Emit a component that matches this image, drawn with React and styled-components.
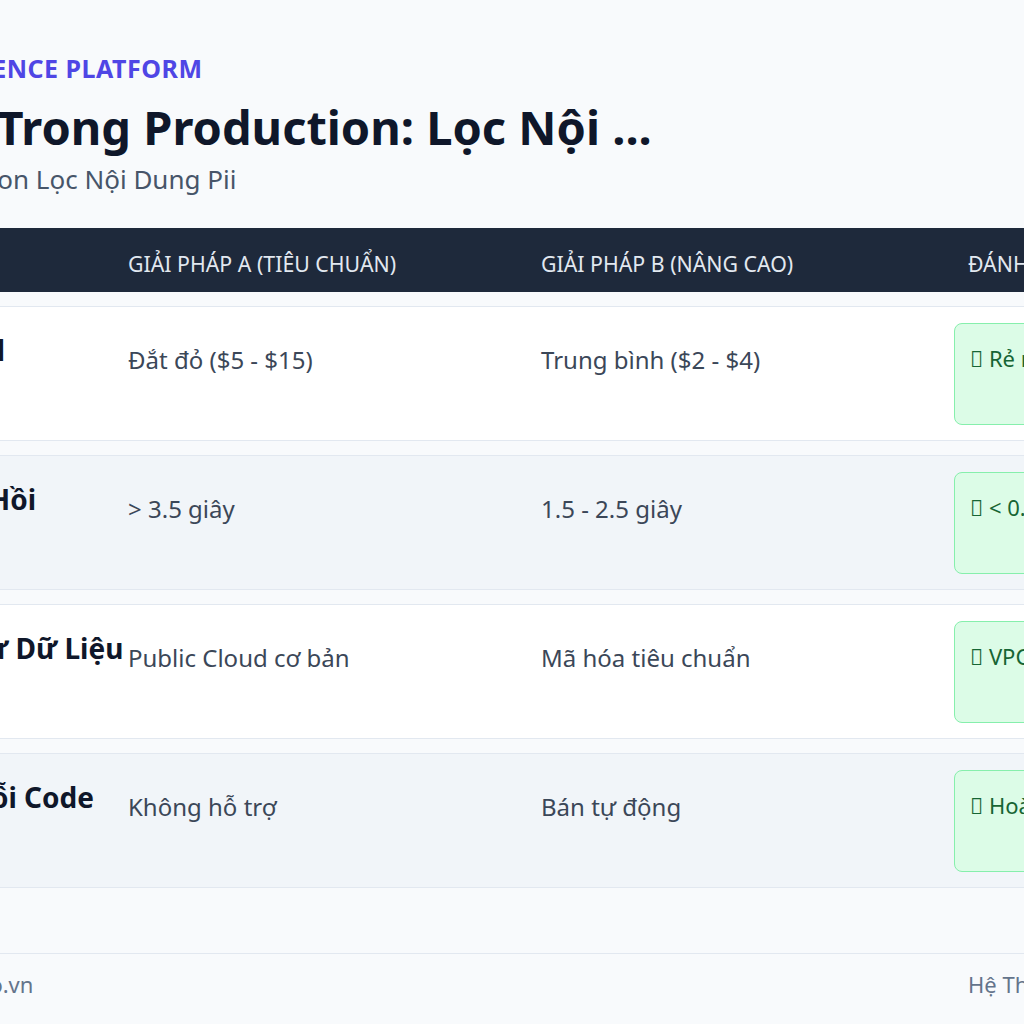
import styled, { createGlobalStyle } from "styled-components";

const GlobalStyle = createGlobalStyle`
  html, body {
    margin: 0;
    padding: 0;
    background: #f8fafc;
    overflow: hidden;
  }
  * {
    box-sizing: border-box;
  }
`;

// icon-font code points (no icon font is loaded, so they show as boxes like the original)
const rows = [
  {
    label: "Giá Thành Model",
    a: "Đắt đỏ ($5 - $15)",
    b: "Trung bình ($2 - $4)",
    best: "\uf155 Rẻ nhất (< $1)",
  },
  {
    label: "Thời Gian Phản Hồi",
    a: "> 3.5 giây",
    b: "1.5 - 2.5 giây",
    best: "\uf0e7 < 0.8 giây",
  },
  {
    label: "Mức Độ Riêng Tư Dữ Liệu",
    a: "Public Cloud cơ bản",
    b: "Mã hóa tiêu chuẩn",
    best: "\uf023 VPC riêng biệt",
  },
  {
    label: "Khả Năng Sửa Lỗi Code",
    a: "Không hỗ trợ",
    b: "Bán tự động",
    best: "\uf00c Hoàn toàn tự động",
  },
];

export default function App() {
  return (
    <Page>
      <GlobalStyle />
      <Slide>
        <Eyebrow>Business Intelligence Platform</Eyebrow>
        <Title>Guardrails Trong Production: Lọc Nội ...</Title>
        <Subtitle>Guardrail AI Production Lọc Nội Dung Pii</Subtitle>

        <Table>
          <HeadRow>
            <HeadCell $pad="29px">Tiêu chí</HeadCell>
            <HeadCell>Giải pháp A (Tiêu chuẩn)</HeadCell>
            <HeadCell>Giải pháp B (Nâng cao)</HeadCell>
            <HeadCell $pad="14px">Đánh giá tối ưu</HeadCell>
          </HeadRow>
          <Body>
            {rows.map((r, i) => (
              <Row key={r.label} $alt={i % 2 === 1}>
                <Label>{r.label}</Label>
                <Cell>{r.a}</Cell>
                <Cell>{r.b}</Cell>
                <div>
                  <Badge>{r.best}</Badge>
                </div>
              </Row>
            ))}
          </Body>
        </Table>

        <Footer>
          <span>Bản quyền © 2025 studio.vn</span>
          <span>Hệ Thống Kiểm Soát Nội Dung</span>
        </Footer>
      </Slide>
    </Page>
  );
}

const Page = styled.div`
  display: flex;
  justify-content: center;
  width: 100%;
  min-height: 100vh;
  overflow: hidden;
  font-family: "Noto Sans", "Open Sans", sans-serif;
`;

const Slide = styled.div`
  flex: 0 0 1672px;
  width: 1672px;
  padding: 50px 66px 0;
  display: flex;
  flex-direction: column;
`;

const Eyebrow = styled.div`
  font-size: 25px;
  font-weight: 700;
  line-height: 1.5;
  letter-spacing: 0.5px;
  color: #4f46e5;
  text-transform: uppercase;
  white-space: nowrap;
`;

const Title = styled.h1`
  margin: 11px 0 0;
  font-size: 47px;
  font-weight: 700;
  line-height: 1.2;
  color: #0f172a;
  white-space: nowrap;
`;

const Subtitle = styled.div`
  margin-top: 5px;
  font-size: 26px;
  line-height: 1.5;
  color: #475569;
  white-space: nowrap;
`;

const Table = styled.div`
  margin-top: 29px;
`;

const columns = "386px 413px 413px 1fr";

const HeadRow = styled.div`
  display: grid;
  grid-template-columns: ${columns};
  height: 64px;
  padding-top: 20px;
  background: #1e293b;
`;

const HeadCell = styled.div`
  padding-left: ${(p) => p.$pad || "0"};
  font-size: 21.3px;
  line-height: 1.5;
  color: #e2e8f0;
  text-transform: uppercase;
  white-space: nowrap;
`;

const Body = styled.div`
  display: flex;
  flex-direction: column;
  gap: 14px;
  margin-top: 14px;
`;

const Row = styled.div`
  display: grid;
  grid-template-columns: ${columns};
  align-items: start;
  padding: 16px 0 15px;
  background: ${(p) => (p.$alt ? "#f1f5f9" : "#ffffff")};
  border-top: 1px solid #e2e8f0;
  border-bottom: 1px solid #e2e8f0;
`;

const Label = styled.div`
  padding: 6px 0 0 29px;
  font-size: 28px;
  font-weight: 700;
  line-height: 1.5;
  color: #0f172a;
  white-space: nowrap;
`;

const Cell = styled.div`
  padding-top: 19px;
  font-size: 24px;
  line-height: 1.5;
  color: #3b4758;
  white-space: nowrap;
`;

const Badge = styled.div`
  min-height: 102px;
  padding: 18px 15px;
  font-size: 22px;
  line-height: 1.5;
  color: #166534;
  background: #dcfce7;
  border: 1px solid #86efac;
  border-radius: 8px;
  white-space: nowrap;
`;

const Footer = styled.div`
  display: flex;
  justify-content: space-between;
  margin-top: 65px;
  padding: 14px 0 22px;
  border-top: 1px solid #e2e8f0;
  font-size: 22px;
  line-height: 1.5;
  color: #64748b;
  white-space: nowrap;
`;
